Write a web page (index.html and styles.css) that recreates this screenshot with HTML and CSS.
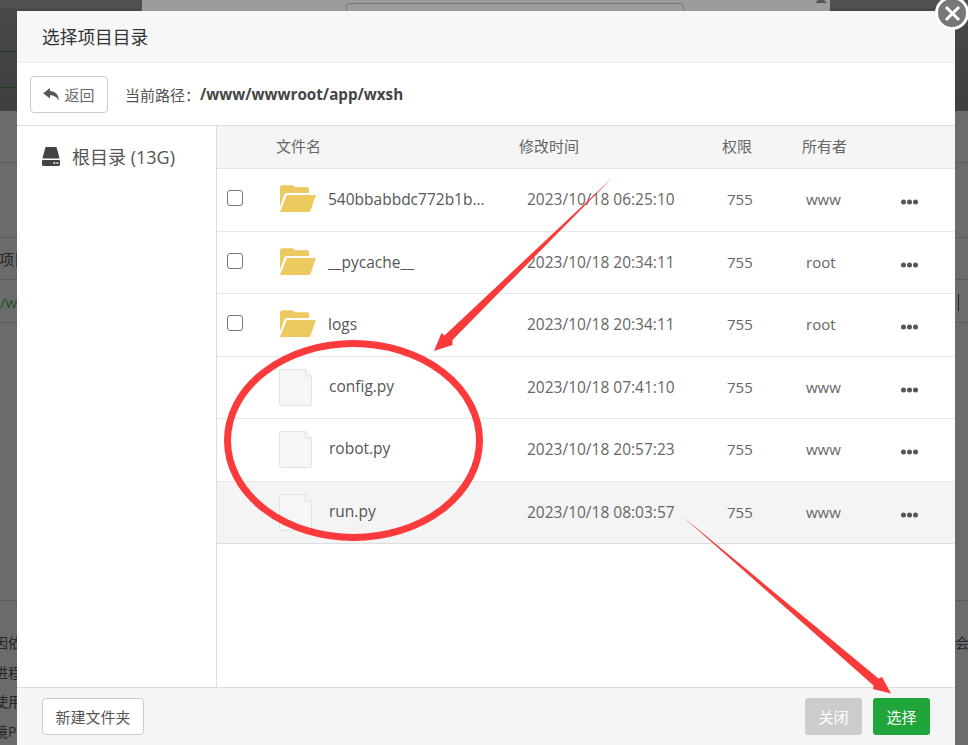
FILE: index.html
```html
<!DOCTYPE html>
<html lang="zh">
<head>
<meta charset="utf-8">
<title>选择项目目录</title>
<link rel="stylesheet" href="styles.css">
</head>
<body>
<div class="backdrop">
  <div class="bg-top"><div class="bg-dark bg-dark-l"></div><div class="bg-mid"><div class="bg-input"></div><svg class="bg-tri" viewBox="0 0 12 3"><path d="M3 0h6l3 3H0z"/></svg></div><div class="bg-dark bg-dark-r"></div></div>
  <div class="bg-row r52"></div>
  <div class="bg-row r75"></div>
  <div class="bg-row r42"></div>
  <div class="bg-row r43"></div>
  <div class="bg-row r278"></div>
  <span class="bg-t bg-a">项目</span><span class="bg-t bg-b">/w</span>
  <span class="bg-t bg-c">因依</span><span class="bg-t bg-d">进程</span><span class="bg-t bg-e">使用</span><span class="bg-t bg-f">境P</span>
  <span class="bg-t bg-g">会</span><span class="bg-bar"></span>
</div>

<main class="modal">
  <header class="modal-title">选择项目目录</header>
  <div class="toolbar">
    <button class="btn-back"><svg class="back-icon" viewBox="0 0 16 13"><path d="M7 0 .2 5.300 7 10.600V7.300c3.800 0 6.500 1.300 8.800 5.500 0-5.500-2.800-9.200-8.800-9.700z"/></svg>返回</button>
    <span class="path-label">当前路径：</span><strong class="path-value">/www/wwwroot/app/wxsh</strong>
  </div>
  <div class="body">
    <aside class="side">
      <svg class="disk" viewBox="0 0 18 19"><path d="M3.500 0h11L17.600 11.500H.4z"/><path fill-rule="evenodd" d="M1.200 13h15.600c.6 0 1.200.6 1.200 1.200v3.600c0 .6-.6 1.200-1.200 1.200H1.200C.6 19 0 18.400 0 17.800v-3.600C0 13.600.6 13 1.200 13zM11.500 15.300h1.800v1.500h-1.800zM14.500 15.300h1.800v1.500h-1.800z"/></svg>
      <span>根目录 (13G)</span>
    </aside>
    <section class="files">
      <div class="thead">
        <span class="th-name">文件名</span><span class="th-time">修改时间</span><span class="th-perm">权限</span><span class="th-owner">所有者</span>
      </div>
      <div class="row h63">
        <span class="check"></span>
        <svg class="folder" viewBox="0 0 36 27"><path d="M0 3C0 1.300 1 .3 2.500 .3h9.500c1.300 0 2 .7 2.800 1.900h13c.8 0 1.200.4 1.200 1.200V8H7C5.500 8 4.700 8.800 4.200 10L0 21.500z"/><path d="M6.800 10H36L30 27H0z"/></svg>
        <span class="name">540bbabbdc772b1b...</span>
        <span class="time">2023/10/18 06:25:10</span><span class="perm">755</span><span class="owner">www</span><span class="more"><i></i><i></i><i></i></span>
      </div>
      <div class="row h62">
        <span class="check"></span>
        <svg class="folder" viewBox="0 0 36 27"><path d="M0 3C0 1.300 1 .3 2.500 .3h9.500c1.300 0 2 .7 2.800 1.900h13c.8 0 1.200.4 1.200 1.200V8H7C5.500 8 4.700 8.800 4.200 10L0 21.500z"/><path d="M6.800 10H36L30 27H0z"/></svg>
        <span class="name">__pycache__</span>
        <span class="time">2023/10/18 20:34:11</span><span class="perm">755</span><span class="owner">root</span><span class="more"><i></i><i></i><i></i></span>
      </div>
      <div class="row h63">
        <span class="check"></span>
        <svg class="folder" viewBox="0 0 36 27"><path d="M0 3C0 1.300 1 .3 2.500 .3h9.500c1.300 0 2 .7 2.800 1.900h13c.8 0 1.200.4 1.200 1.200V8H7C5.500 8 4.700 8.800 4.200 10L0 21.500z"/><path d="M6.800 10H36L30 27H0z"/></svg>
        <span class="name">logs</span>
        <span class="time">2023/10/18 20:34:11</span><span class="perm">755</span><span class="owner">root</span><span class="more"><i></i><i></i><i></i></span>
      </div>
      <div class="row h62 file">
        <svg class="doc" viewBox="0 0 33 37"><path d="M2.500 .5h24l6 6.500v27.500a2 2 0 0 1-2 2h-28a2 2 0 0 1-2-2v-32a2 2 0 0 1 2-2z"/><path d="M26.500 .5v6.500h6"/></svg>
        <span class="name">config.py</span>
        <span class="time">2023/10/18 07:41:10</span><span class="perm">755</span><span class="owner">www</span><span class="more"><i></i><i></i><i></i></span>
      </div>
      <div class="row h63 file">
        <svg class="doc" viewBox="0 0 33 37"><path d="M2.500 .5h24l6 6.500v27.500a2 2 0 0 1-2 2h-28a2 2 0 0 1-2-2v-32a2 2 0 0 1 2-2z"/><path d="M26.500 .5v6.500h6"/></svg>
        <span class="name">robot.py</span>
        <span class="time">2023/10/18 20:57:23</span><span class="perm">755</span><span class="owner">www</span><span class="more"><i></i><i></i><i></i></span>
      </div>
      <div class="row h62 file hover">
        <svg class="doc" viewBox="0 0 33 37"><path d="M2.500 .5h24l6 6.500v27.500a2 2 0 0 1-2 2h-28a2 2 0 0 1-2-2v-32a2 2 0 0 1 2-2z"/><path d="M26.500 .5v6.500h6"/></svg>
        <span class="name">run.py</span>
        <span class="time">2023/10/18 08:03:57</span><span class="perm">755</span><span class="owner">www</span><span class="more"><i></i><i></i><i></i></span>
      </div>
    </section>
  </div>
  <footer class="foot">
    <button class="btn-new">新建文件夹</button>
    <div class="foot-right"><button class="btn-close">关闭</button><button class="btn-ok">选择</button></div>
  </footer>
</main>

<button class="close-x" aria-label="关闭"><svg viewBox="0 0 16 16"><path d="M2.500 2.500l11 11M13.500 2.500l-11 11"/></svg></button>

<svg class="marks" viewBox="0 0 968 745">
  <path class="ink" d="M612 178 452.500 340 452.500 345 434 351 441.500 333 444.500 335.500z"/>
  <ellipse class="ring" cx="353.500" cy="440.500" rx="126" ry="97"/>
  <path class="ink" d="M682 516 878.500 678.500 882 677 891 693.500 873 689 873.500 685.500z"/>
</svg>
</body>
</html>
```

FILE: styles.css
```css
* { box-sizing: border-box; }
html, body { margin: 0; height: 100%; }
body {
  position: relative;
  width: 968px;
  height: 745px;
  overflow: hidden;
  background: #6b6b6b;
  font-family: "Open Sans", "Noto Sans CJK SC", sans-serif;
  color: #555;
}
.backdrop { position: absolute; inset: 0; }
.bg-top { display: flex; height: 111px; }
.bg-dark { background: linear-gradient(#505050 0, #505050 8px, #484848 9px, #3f3f3f 100%); }
.bg-dark-l {
  flex: 0 0 142px;
  background:
    linear-gradient(#1d3d1d, #1d3d1d) 0 51px / 100% 1px no-repeat,
    linear-gradient(#1d3d1d, #1d3d1d) 0 87px / 100% 1px no-repeat,
    linear-gradient(#505050 0, #505050 8px, #484848 9px, #3f3f3f 100%);
}
.bg-dark-r { flex: 0 0 138px; }
.bg-mid { flex: 1; background: #9c9c9c; position: relative; padding: 3px 0 0 204px; }
.bg-input { width: 338px; height: 20px; border: 1px solid #777; border-radius: 3px; }
.bg-tri { position: absolute; left: 673px; top: 0; width: 12px; height: 3px; fill: #555; }
.bg-row { border-bottom: 1px solid #5a5a5a; }
.r52 { height: 52px; }
.r75 { height: 75px; }
.r42 { height: 42px; }
.r43 { height: 43px; }
.r278 { height: 278px; }
.bg-t { position: absolute; font-size: 15px; color: #252525; line-height: 18px; }
.bg-a { left: -1px; top: 250px; }
.bg-b { left: 0; top: 293px; color: #1a521f; }
.bg-c { left: -6px; top: 634px; font-size: 14px; }
.bg-d { left: -6px; top: 664px; font-size: 14px; }
.bg-e { left: -6px; top: 693px; font-size: 14px; }
.bg-f { left: -6px; top: 723px; font-size: 14px; }
.bg-g { left: 955px; top: 634px; font-size: 14px; }
.bg-bar { position: absolute; left: 958px; top: 294px; width: 1px; height: 17px; background: #222; }

.modal {
  position: absolute;
  left: 17px;
  top: 11px;
  width: 938px;
  height: 734px;
  background: #fff;
  display: flex;
  flex-direction: column;
}
.modal-title {
  height: 52px;
  flex: none;
  background: #f7f7f7;
  border-bottom: 1px solid #eee;
  padding-left: 25px;
  font-size: 17.700px;
  line-height: 53px;
  color: #333;
}
.toolbar {
  height: 63px;
  flex: none;
  display: flex;
  align-items: center;
  padding-left: 13px;
  border-bottom: 1px solid #ddd;
  font-size: 15px;
  color: #555;
}
button { font-family: inherit; cursor: pointer; }
.btn-back {
  width: 78px;
  height: 37px;
  margin-right: 17px;
  background: #fff;
  border: 1px solid #ccc;
  border-radius: 4px;
  color: #666;
  font-size: 15px;
  display: flex;
  align-items: center;
  justify-content: center;
  gap: 5px;
  padding: 0;
}
.back-icon { width: 16px; height: 13px; fill: #555; }
.path-value { color: #444; font-size: 15.200px; font-weight: 700; }
.body { flex: 1; display: flex; min-height: 0; }
.side {
  width: 200px;
  flex: none;
  border-right: 1px solid #ddd;
  padding: 19px 0 0 25px;
  display: flex;
  align-items: flex-start;
  gap: 12px;
  font-size: 18px;
  line-height: 24px;
  color: #555;
}
.disk { width: 18px; height: 19px; fill: #444; margin-top: 2px; }
.files { flex: 1; min-width: 0; }
.thead {
  position: relative;
  height: 43px;
  background: #f5f5f5;
  border-bottom: 1px solid #e5e5e5;
  font-size: 15px;
  line-height: 41px;
  color: #666;
}
.thead span { position: absolute; top: 0; }
.th-name { left: 59px; }
.th-time { left: 302px; }
.th-perm { left: 505px; }
.th-owner { left: 585px; }
.row {
  position: relative;
  border-bottom: 1px solid #e8e8e8;
  font-size: 15px;
  color: #666;
  display: flex;
  align-items: center;
}
.h63 { height: 63px; }
.h62 { height: 62px; }
.hover { background: #f4f4f4; border-bottom-color: #ddd; }
.row > span { position: absolute; top: 50%; transform: translateY(-50%); line-height: 20px; white-space: nowrap; }
.check {
  left: 10px;
  width: 16px;
  height: 16px;
  margin-top: -2px;
  border: 1px solid #767676;
  border-radius: 3px;
  background: #fff;
}
.folder { position: absolute; left: 63px; top: 16px; width: 36px; height: 27px; fill: #ecca5f; }
.doc { position: absolute; left: 62px; top: 12px; width: 33px; height: 37px; fill: #f6f6f6; stroke: #e2e2e2; stroke-width: 1; }
.row > .name { left: 111px; font-size: 15.500px; color: #555; margin-top: -1px; }
.file > .name { left: 112px; margin-top: -2px; }
.row > .time { left: 310px; font-size: 15.500px; margin-top: -1px; }
.row > .perm { left: 510px; margin-top: -1px; }
.row > .owner { left: 589px; margin-top: -1px; }
.row > .more { left: 684px; display: flex; gap: 1px; margin-top: 2px; }
.more i { width: 5px; height: 5px; border-radius: 50%; background: #555; }
.foot {
  height: 58px;
  flex: none;
  background: #f5f5f5;
  border-top: 1px solid #ddd;
  display: flex;
  align-items: center;
  justify-content: space-between;
  padding: 0 25px;
}
.foot-right { display: flex; gap: 11px; }
.btn-new {
  width: 102px;
  height: 37px;
  background: #fff;
  border: 1px solid #ccc;
  border-radius: 4px;
  color: #555;
  font-size: 15px;
  padding: 0;
}
.btn-close, .btn-ok {
  width: 57px;
  height: 37px;
  border: 0;
  border-radius: 3px;
  color: #fff;
  font-size: 15px;
  padding: 0;
}
.btn-close { background: #ccc; }
.btn-ok { background: #20a53a; }
.close-x {
  position: absolute;
  left: 935px;
  top: -4px;
  width: 34px;
  height: 34px;
  border-radius: 50%;
  background: #777;
  border: 3px solid #fff;
  padding: 0;
  display: flex;
  align-items: center;
  justify-content: center;
}
.close-x svg { width: 19px; height: 19px; fill: none; stroke: #fff; stroke-width: 2.500; }
.marks { position: absolute; left: 0; top: 0; width: 968px; height: 745px; pointer-events: none; }
.ink { fill: #f93a3a; }
.ring { fill: none; stroke: #fb3b3b; stroke-width: 7; }
```
